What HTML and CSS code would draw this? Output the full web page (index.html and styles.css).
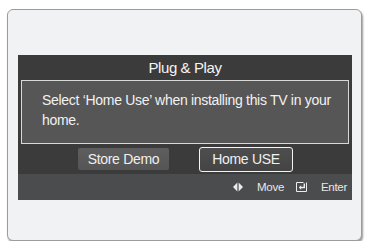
FILE: index.html
```html
<!DOCTYPE html>
<html>
<head>
<meta charset="utf-8">
<link rel="stylesheet" href="styles.css">
</head>
<body>
<div class="card">
  <div class="panel">
    <div class="title">Plug &amp; Play</div>
    <div class="message">Select ‘Home Use’ when installing this TV in your home.</div>
    <div class="buttons">
      <div class="btn">Store Demo</div>
      <div class="btn selected">Home USE</div>
    </div>
    <div class="footer">
      <span class="hint">
        <svg class="ico" width="10" height="10" viewBox="0 0 10 10"><polygon points="0,5 4.4,0.5 4.4,9.5" fill="#ececec"/><polygon points="10,5 5.6,0.5 5.6,9.5" fill="#ececec"/></svg>
        Move
      </span>
      <span class="hint">
        <svg class="ico" width="11" height="10" viewBox="0 0 11 10"><path d="M7.5 0.5 H0.5 V9.5 H10.5 V0.5" fill="none" stroke="#ececec" stroke-width="1"/><path d="M8.3 1.5 V5.5 H4" fill="none" stroke="#ececec" stroke-width="1.4"/><polygon points="2.8,5.5 5.2,3.3 5.2,7.7" fill="#ececec"/></svg>
        Enter
      </span>
    </div>
  </div>
</div>
</body>
</html>
```
FILE: styles.css
```css
html, body {
  margin: 0;
  padding: 0;
  background: #ffffff;
}
body {
  font-family: "Liberation Sans", Arial, sans-serif;
}
.card {
  box-sizing: border-box;
  margin: 9px 0 0 7px;
  width: 355px;
  height: 232px;
  background: #f1f2f4;
  border: 1px solid #9c9c9c;
  border-radius: 6px;
  box-shadow: 1px 2px 2px #9a9a9a;
  padding: 45px 0 0 10px;
}
.panel {
  width: 334px;
  background: #3b3b3b;
  display: flex;
  flex-direction: column;
}
.title {
  height: 25px;
  line-height: 26px;
  text-align: center;
  color: #f4f4f4;
  font-size: 15px;
  letter-spacing: -0.4px;
}
.message {
  box-sizing: border-box;
  margin: 0 3px 0 3px;
  height: 64px;
  border: 1px solid #d8d8d8;
  background: #565656;
  color: #f2f2f2;
  font-size: 14px;
  line-height: 20px;
  letter-spacing: -0.3px;
  padding: 9px 8px 0 20px;
}
.buttons {
  height: 30px;
  display: flex;
  justify-content: center;
  align-items: center;
  gap: 30px;
  padding-left: 1px;
}
.btn {
  box-sizing: border-box;
  width: 91px;
  height: 22px;
  line-height: 22px;
  text-align: center;
  color: #f0f0f0;
  font-size: 14px;
  letter-spacing: -0.3px;
  background: linear-gradient(#5e5e5e, #555555);
  border-radius: 2px;
}
.btn.selected {
  width: 94px;
  height: 25px;
  line-height: 22px;
  border: 1.5px solid #f4f4f4;
  border-radius: 3px;
  background: linear-gradient(#4e4e4e, #444444);
}
.footer {
  height: 26px;
  background: #4b4c4e;
  display: flex;
  justify-content: flex-end;
  align-items: center;
  gap: 12px;
  padding-right: 5px;
  color: #e8e8e8;
  font-size: 11.5px;
  letter-spacing: -0.3px;
}
.hint {
  display: flex;
  align-items: center;
  gap: 14px;
}
.ico {
  display: block;
}
```
